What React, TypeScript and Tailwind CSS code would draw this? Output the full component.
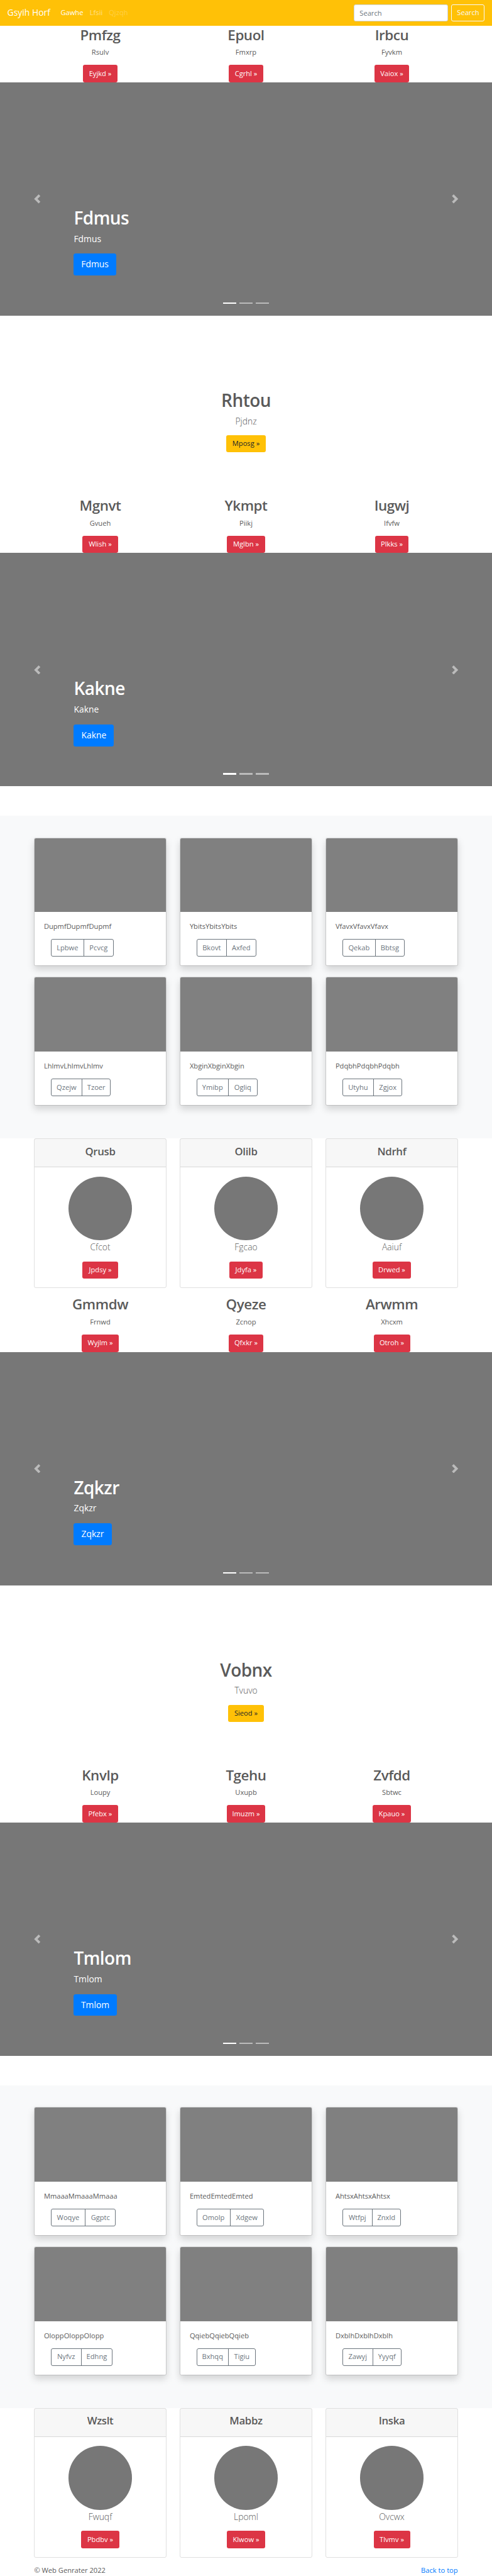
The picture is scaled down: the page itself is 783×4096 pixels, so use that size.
type Feature = { title: string; text: string; button: string; width: string };
type AlbumItem = { text: string; left: string; right: string; leftWidth: string; width: string };

const redButton =
  "flex h-9.5 items-center justify-center rounded-[3px] bg-[#dc3545] text-[11.15px] text-white";

function Navbar() {
  return (
    <nav className="flex h-14 items-center bg-[#ffc107] px-4 text-[11.15px] text-white">
      <a className="mr-4 w-[67.4px] whitespace-nowrap text-[13.9px]">Gsyih Horf</a>
      <a className="w-16 px-2">Gawhe</a>
      <a className="w-10.5 px-2 text-white/50">Lfsii</a>
      <a className="px-2 text-white/25">Qjzqh</a>
      <input
        placeholder="Search"
        className="mr-2 ml-auto h-9.5 w-51.75 rounded-[3px] border border-[#ced4da] bg-white px-3 placeholder:text-[#6c757d]"
      />
      <button className="h-9.5 w-18.25 rounded-[3px] border border-[#f8f9fa] text-[#f8f9fa]">
        Search
      </button>
    </nav>
  );
}

function Features({ items }: { items: Feature[] }) {
  return (
    <section className="mx-auto grid w-240 grid-cols-3">
      {items.map((item) => (
        <div key={item.title} className="flex flex-col items-center">
          <h2 className="mb-2 h-[27.84px] pt-px text-[22.4px] leading-[27.84px] font-semibold tracking-[-0.02em]">
            {item.title}
          </h2>
          <p className="mb-4 h-6 text-[11.15px] leading-[18px]">{item.text}</p>
          <a className={`${redButton} ${item.width}`}>{item.button} »</a>
        </div>
      ))}
    </section>
  );
}

function Carousel({ name, width }: { name: string; width: string }) {
  return (
    <section className="relative mb-16 flex h-128 items-center justify-between bg-[#777] px-[51.5px] text-white">
      <svg viewBox="0 0 8 8" className="size-5 fill-white opacity-50">
        <path d="M5.25 0l-4 4 4 4 1.5-1.5L4.25 4l2.5-2.5L5.25 0z" />
      </svg>
      <div className="absolute bottom-22 left-40.5">
        <h1 className="mb-2 h-12 pt-px text-[28px] leading-[34.8px] font-semibold tracking-[-0.02em]">
          {name}
        </h1>
        <p className="mb-5 h-7 text-[13.9px] leading-[21px]">{name}</p>
        <a
          className={`flex h-12 items-center justify-center rounded-[3.5px] bg-[#007bff] text-[13.9px] ${width}`}
        >
          {name}
        </a>
      </div>
      <div className="absolute inset-x-0 bottom-6.5 flex justify-center gap-1.5">
        <span className="h-0.75 w-7.5 bg-white" />
        <span className="h-0.75 w-7.5 bg-white/50" />
        <span className="h-0.75 w-7.5 bg-white/50" />
      </div>
      <svg viewBox="0 0 8 8" className="size-5 fill-white opacity-50">
        <path d="M2.75 0l-1.5 1.5L3.75 4l-2.5 2.5L2.75 8l4-4-4-4z" />
      </svg>
    </section>
  );
}

function Intro({ title, text, button, width }: Feature) {
  return (
    <section className="flex flex-col items-center py-24">
      <h1 className="mb-2 h-12 pt-px text-[28px] leading-[34.8px] font-semibold tracking-[-0.02em]">
        {title}
      </h1>
      <p className="mb-4 h-7.5 text-[13.9px] leading-[22.5px] font-light">{text}</p>
      <a
        className={`flex h-9.5 items-center justify-center rounded-[3px] bg-[#ffc107] text-[11.15px] text-[#212529] ${width}`}
      >
        {button} »
      </a>
    </section>
  );
}

function Album({ items }: { items: AlbumItem[] }) {
  return (
    <section className="bg-[#f8f9fa] py-12">
      <div className="mx-auto grid w-232.5 grid-cols-3 gap-x-7.5">
        {items.map((item) => (
          <div
            key={item.text}
            className="mb-6 h-70.5 overflow-hidden rounded-[3px] border border-black/12 bg-white bg-clip-padding shadow-[0_6px_12px_rgba(0,0,0,0.15)]"
          >
            <div className="h-40.5 bg-[#808080]" />
            <div className="p-5">
              <p className="mb-4 h-6 text-[11.15px] leading-[18px]">{item.text}</p>
              <div
                className={`ml-3.75 flex h-9.5 rounded-[3px] border border-[#6c757d] text-[11.15px] text-[#6c757d] ${item.width}`}
              >
                <span
                  className={`flex items-center justify-center border-r border-[#6c757d] ${item.leftWidth}`}
                >
                  {item.left}
                </span>
                <span className="flex flex-1 items-center justify-center">{item.right}</span>
              </div>
            </div>
          </div>
        ))}
      </div>
    </section>
  );
}

function Profiles({ items }: { items: Feature[] }) {
  return (
    <section className="mx-auto mb-4 grid w-232.5 grid-cols-3 gap-x-7.5">
      {items.map((item) => (
        <div
          key={item.title}
          className="flex h-[237.8px] flex-col items-center rounded-[3px] border border-black/12"
        >
          <h4 className="h-[45.2px] w-full border-b border-black/12 bg-black/3 pt-3 text-center text-[16.8px] leading-[21.5px] font-semibold tracking-[-0.02em]">
            {item.title}
          </h4>
          <div className="mt-5 size-35 shrink-0 rounded-full bg-[#777]" />
          <p className="mb-4 h-7.5 text-[13.9px] leading-[22.5px] font-light">{item.text}</p>
          <a className={`${redButton} ${item.width}`}>{item.button} »</a>
        </div>
      ))}
    </section>
  );
}

export default function App() {
  return (
    <div className="h-[4096px] w-[783px] overflow-hidden bg-white font-['Open_Sans',sans-serif] text-[#5a5a5a] [--spacing:2.9px]">
      <Navbar />
      <Features
        items={[
          { title: "Pmfzg", text: "Rsulv", button: "Eyjkd", width: "w-19" },
          { title: "Epuol", text: "Fmxrp", button: "Cgrhl", width: "w-19" },
          { title: "Irbcu", text: "Fyvkm", button: "Vaiox", width: "w-19" },
        ]}
      />
      <Carousel name="Fdmus" width="w-23.25" />
      <Intro title="Rhtou" text="Pjdnz" button="Mposg" width="w-22" />
      <Features
        items={[
          { title: "Mgnvt", text: "Gvueh", button: "Wlish", width: "w-19.5" },
          { title: "Ykmpt", text: "Piikj", button: "Mglbn", width: "w-21" },
          { title: "Iugwj", text: "Ifvfw", button: "Plkks", width: "w-18.5" },
        ]}
      />
      <Carousel name="Kakne" width="w-22" />
      <Album
        items={[
          { text: "DupmfDupmfDupmf", left: "Lpbwe", right: "Pcvcg", leftWidth: "w-18", width: "w-34.5" },
          { text: "YbitsYbitsYbits", left: "Bkovt", right: "Axfed", leftWidth: "w-16.25", width: "w-32.75" },
          { text: "VfavxVfavxVfavx", left: "Qekab", right: "Bbtsg", leftWidth: "w-18", width: "w-34.25" },
          { text: "LhlmvLhlmvLhlmv", left: "Qzejw", right: "Tzoer", leftWidth: "w-17", width: "w-33" },
          { text: "XbginXbginXbgin", left: "Ymibp", right: "Ogliq", leftWidth: "w-17.25", width: "w-33.5" },
          { text: "PdqbhPdqbhPdqbh", left: "Utyhu", right: "Zgjox", leftWidth: "w-17", width: "w-33" },
        ]}
      />
      <Profiles
        items={[
          { title: "Qrusb", text: "Cfcot", button: "Jpdsy", width: "w-19.5" },
          { title: "Olilb", text: "Fgcao", button: "Jdyfa", width: "w-18.5" },
          { title: "Ndrhf", text: "Aaiuf", button: "Drwed", width: "w-21" },
        ]}
      />
      <Features
        items={[
          { title: "Gmmdw", text: "Frnwd", button: "Wyjlm", width: "w-20.5" },
          { title: "Qyeze", text: "Zcnop", button: "Qfxkr", width: "w-19" },
          { title: "Arwmm", text: "Xhcxm", button: "Otroh", width: "w-20" },
        ]}
      />
      <Carousel name="Zqkzr" width="w-20.75" />
      <Intro title="Vobnx" text="Tvuvo" button="Sieod" width="w-19.5" />
      <Features
        items={[
          { title: "Knvlp", text: "Loupy", button: "Pfebx", width: "w-19.5" },
          { title: "Tgehu", text: "Uxupb", button: "Imuzm", width: "w-21.25" },
          { title: "Zvfdd", text: "Sbtwc", button: "Kpauo", width: "w-21" },
        ]}
      />
      <Carousel name="Tmlom" width="w-23.5" />
      <Album
        items={[
          { text: "MmaaaMmaaaMmaaa", left: "Woqye", right: "Ggptc", leftWidth: "w-18.75", width: "w-35.75" },
          { text: "EmtedEmtedEmted", left: "Omolp", right: "Xdgew", leftWidth: "w-18.25", width: "w-37" },
          { text: "AhtsxAhtsxAhtsx", left: "Wtfpj", right: "Znxld", leftWidth: "w-16.25", width: "w-32" },
          { text: "OloppOloppOlopp", left: "Nyfvz", right: "Edhng", leftWidth: "w-16.5", width: "w-34" },
          { text: "QqiebQqiebQqieb", left: "Bxhqq", right: "Tigiu", leftWidth: "w-17.25", width: "w-32.5" },
          { text: "DxblhDxblhDxblh", left: "Zawyj", right: "Yyyqf", leftWidth: "w-16.5", width: "w-32.5" },
        ]}
      />
      <Profiles
        items={[
          { title: "Wzslt", text: "Fwuqf", button: "Pbdbv", width: "w-21" },
          { title: "Mabbz", text: "Lpoml", button: "Klwow", width: "w-21" },
          { title: "Inska", text: "Ovcwx", button: "Tlvmv", width: "w-20" },
        ]}
      />
      <footer className="mx-auto flex h-6 w-232.5 justify-between text-[11.15px] leading-[17.4px]">
        <p>© Web Genrater 2022</p>
        <a className="text-[#007bff]">Back to top</a>
      </footer>
    </div>
  );
}
